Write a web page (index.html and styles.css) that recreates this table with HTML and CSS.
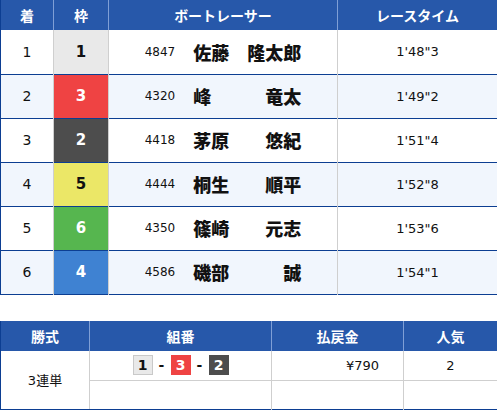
FILE: index.html
```html
<!DOCTYPE html>
<html lang="ja">
<head>
<meta charset="utf-8">
<link rel="stylesheet" href="styles.css">
</head>
<body>
<table class="race">
  <colgroup><col class="c1"><col class="c2"><col class="c3"><col class="c4"></colgroup>
  <thead>
    <tr><th>着</th><th>枠</th><th>ボートレーサー</th><th>レースタイム</th></tr>
  </thead>
  <tbody>
    <tr><td class="rank">1</td><td class="waku w1">1</td><td><div class="racer"><span class="no">4847</span><span class="name"><b>佐藤</b><b>隆太郎</b></span></div></td><td class="time">1'48"3</td></tr>
    <tr class="alt"><td class="rank">2</td><td class="waku w3">3</td><td><div class="racer"><span class="no">4320</span><span class="name"><b>峰</b><b>竜太</b></span></div></td><td class="time">1'49"2</td></tr>
    <tr><td class="rank">3</td><td class="waku w2">2</td><td><div class="racer"><span class="no">4418</span><span class="name"><b>茅原</b><b>悠紀</b></span></div></td><td class="time">1'51"4</td></tr>
    <tr class="alt"><td class="rank">4</td><td class="waku w5">5</td><td><div class="racer"><span class="no">4444</span><span class="name"><b>桐生</b><b>順平</b></span></div></td><td class="time">1'52"8</td></tr>
    <tr><td class="rank">5</td><td class="waku w6">6</td><td><div class="racer"><span class="no">4350</span><span class="name"><b>篠崎</b><b>元志</b></span></div></td><td class="time">1'53"6</td></tr>
    <tr class="alt"><td class="rank">6</td><td class="waku w4">4</td><td><div class="racer"><span class="no">4586</span><span class="name"><b>磯部</b><b>誠</b></span></div></td><td class="time">1'54"1</td></tr>
  </tbody>
</table>

<table class="pay">
  <colgroup><col class="p1"><col class="p2"><col class="p3"><col class="p4"></colgroup>
  <thead>
    <tr><th>勝式</th><th>組番</th><th>払戻金</th><th>人気</th></tr>
  </thead>
  <tbody>
    <tr>
      <td class="kind" rowspan="2">3連単</td>
      <td class="combo"><span class="box w1">1</span><span class="dash">-</span><span class="box w3">3</span><span class="dash">-</span><span class="box w2">2</span></td>
      <td class="yen">¥790</td>
      <td class="pop">2</td>
    </tr>
    <tr class="empty"><td></td><td></td><td></td></tr>
  </tbody>
</table>
</body>
</html>
```

FILE: styles.css
```css
* { box-sizing: border-box; }
body {
  margin: 0;
  background: #fff;
  font-family: "DejaVu Sans", "Noto Sans CJK JP", sans-serif;
  color: #111;
}
table {
  border-collapse: collapse;
  table-layout: fixed;
  width: 497px;
}
th {
  height: 30px;
  padding: 0;
  color: #fff;
  font-family: "Noto Sans CJK JP", sans-serif;
  font-weight: bold;
  font-size: 14px;
  background: repeating-conic-gradient(#1c4d9e 0 25%, #3164b5 0 50%) 0 0 / 2px 2px;
  border-left: 1px solid #7f9fd6;
}
th:first-child { border-left: 1px solid #0c3e92; }
th:last-child { border-right: 1px solid #0c3e92; }
td {
  padding: 0;
  text-align: center;
  border-left: 1px solid #cfcfcf;
}
td:first-child { border-left: 1px solid #0c3e92; }
td:last-child { border-right: 1px solid #0c3e92; }

.c1 { width: 53px; }
.c2 { width: 55px; }
.c3 { width: 229px; }
.c4 { width: 160px; }

.race tbody tr { height: 44px; border-bottom: 1px solid #0c3e92; }
.race tbody tr.alt { background: #f1f6fd; }
.rank { font-size: 14px; }
.waku { font-size: 15px; font-weight: bold; }
.time { font-size: 13px; }

.w1 { background: #e9e9e9; color: #111; }
.w2 { background: #4d4d4d; color: #fff; }
.w3 { background: #ef4343; color: #fff; }
.w4 { background: #3f82d2; color: #fff; }
.w5 { background: #ebe767; color: #111; }
.w6 { background: #56b64f; color: #fff; }

.racer {
  display: flex;
  justify-content: center;
  align-items: center;
  gap: 18px;
}
.no { font-size: 12px; }
.name {
  width: 108px;
  display: flex;
  justify-content: space-between;
  font-family: "Noto Sans CJK JP", sans-serif;
  font-size: 18px;
  font-weight: bold;
  line-height: 1;
}

.pay { margin-top: 26px; }
.p1 { width: 89px; }
.p2 { width: 182px; }
.p3 { width: 132px; }
.p4 { width: 94px; }
.pay tbody tr { height: 30px; }
.pay tbody tr:first-child { border-bottom: 1px solid #cfcfcf; }
.pay tbody tr:last-child { border-bottom: 1px solid #0c3e92; height: 29px; }
.pay .empty td:first-child { border-left: 1px solid #cfcfcf; }
.kind { font-size: 13px; border-bottom: 1px solid #0c3e92; }
.combo { font-size: 0; }
.box {
  display: inline-flex;
  width: 20px;
  height: 20px;
  align-items: center;
  justify-content: center;
  font-size: 14px;
  font-weight: bold;
  vertical-align: middle;
}
.box.w1 { border: 1px solid #c9c9c9; }
.dash {
  display: inline-block;
  width: 18px;
  font-size: 14px;
  font-weight: bold;
  vertical-align: middle;
}
.yen { font-size: 13px; text-align: right; padding-right: 24px; }
.pop { font-size: 13px; }
```
